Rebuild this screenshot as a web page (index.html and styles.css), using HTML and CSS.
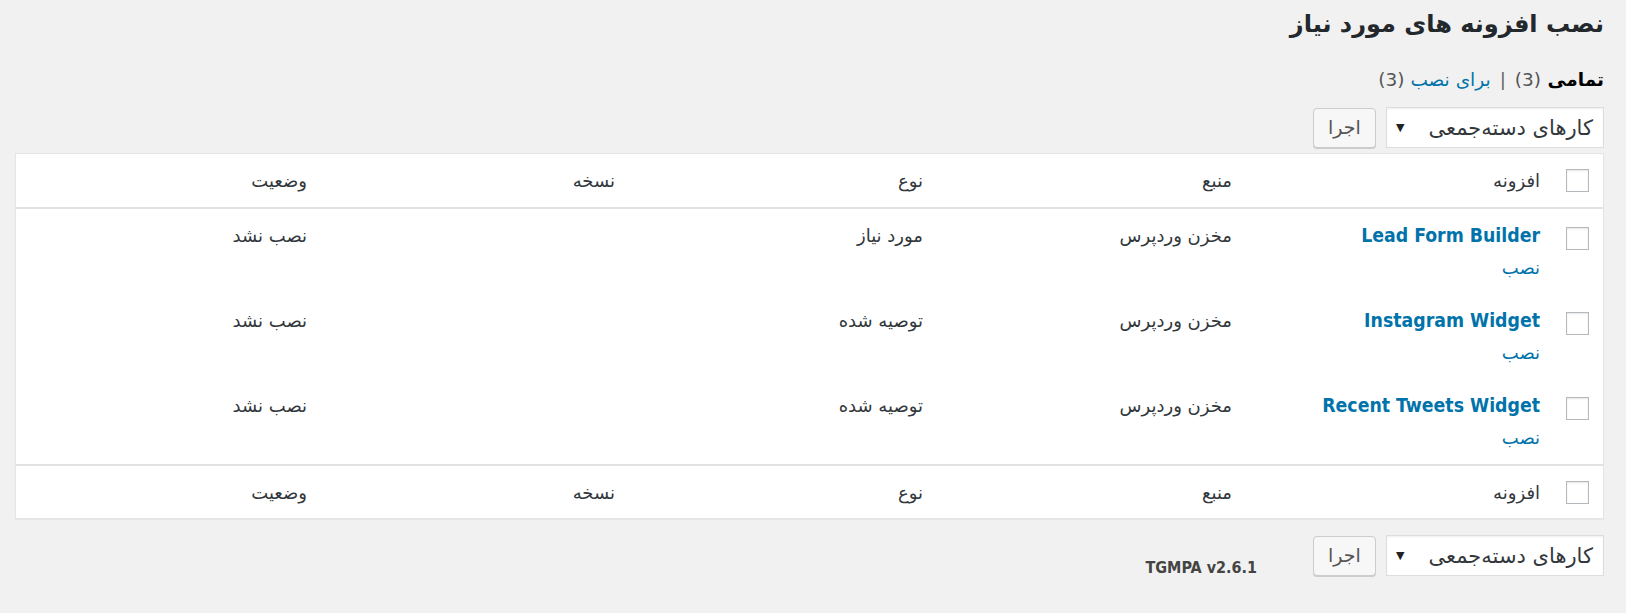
FILE: index.html
```html
<!DOCTYPE html>
<html lang="fa" dir="rtl">
<head>
<meta charset="utf-8">
<title>نصب افزونه های مورد نیاز</title>
<link rel="stylesheet" href="styles.css">
</head>
<body>
<div class="wrap">
  <h1 class="page-title">نصب افزونه های مورد نیاز</h1>
  <ul class="views">
    <li class="view"><a class="view-link current">تمامی <span class="count">(3)</span></a><span class="sep">|</span></li>
    <li class="view"><a class="view-link" href="#">برای نصب <span class="count">(3)</span></a></li>
  </ul>
  <div class="tablenav tablenav-top">
    <div class="bulk">
      <div class="fake-select"><span class="sel-text">کارهای دسته‌جمعی</span><span class="sel-arrow">▼</span></div>
      <button class="btn" type="button">اجرا</button>
    </div>
  </div>
  <table class="plugins">
    <colgroup>
      <col class="c-check"><col class="c-plugin"><col class="c-source"><col class="c-type"><col class="c-version"><col class="c-status">
    </colgroup>
    <thead>
      <tr>
        <th class="check"><input type="checkbox" class="cb"></th>
        <th>افزونه</th><th>منبع</th><th>نوع</th><th>نسخه</th><th>وضعیت</th>
      </tr>
    </thead>
    <tbody>
      <tr>
        <td class="check"><input type="checkbox" class="cb"></td>
        <td><a class="plugin-name" href="#">Lead Form Builder</a><div class="row-actions"><a href="#">نصب</a></div></td>
        <td>مخزن وردپرس</td><td>مورد نیاز</td><td></td><td>نصب نشد</td>
      </tr>
      <tr>
        <td class="check"><input type="checkbox" class="cb"></td>
        <td><a class="plugin-name" href="#">Instagram Widget</a><div class="row-actions"><a href="#">نصب</a></div></td>
        <td>مخزن وردپرس</td><td>توصیه شده</td><td></td><td>نصب نشد</td>
      </tr>
      <tr>
        <td class="check"><input type="checkbox" class="cb"></td>
        <td><a class="plugin-name" href="#">Recent Tweets Widget</a><div class="row-actions"><a href="#">نصب</a></div></td>
        <td>مخزن وردپرس</td><td>توصیه شده</td><td></td><td>نصب نشد</td>
      </tr>
    </tbody>
    <tfoot>
      <tr>
        <th class="check"><input type="checkbox" class="cb"></th>
        <th>افزونه</th><th>منبع</th><th>نوع</th><th>نسخه</th><th>وضعیت</th>
      </tr>
    </tfoot>
  </table>
  <div class="tablenav tablenav-bottom">
    <div class="bulk">
      <div class="fake-select"><span class="sel-text">کارهای دسته‌جمعی</span><span class="sel-arrow">▼</span></div>
      <button class="btn" type="button">اجرا</button>
    </div>
    <p class="version"><strong>TGMPA v2.6.1</strong></p>
  </div>
</div>
</body>
</html>
```
FILE: styles.css
```css
html, body {
  margin: 0;
  padding: 0;
  background: #f1f1f1;
}
body {
  font-family: "DejaVu Sans", sans-serif;
  color: #444;
  font-size: 18px;
}
.wrap {
  padding: 0 22px 0 15px;
}
.page-title {
  margin: 0;
  height: 48px;
  line-height: 48px;
  font-size: 24px;
  font-weight: bold;
  color: #23282d;
}
.views {
  list-style: none;
  margin: 18px 0 0;
  padding: 0;
  display: flex;
  height: 28px;
  line-height: 28px;
  font-size: 18.5px;
  color: #666;
}
.view-link {
  color: #0073aa;
  text-decoration: none;
}
.view-link.current {
  color: #000;
  font-weight: bold;
}
.count {
  color: #555;
  font-weight: normal;
}
.sep {
  margin: 0 9px;
  color: #666;
}
.tablenav {
  display: flex;
}
.tablenav-top {
  margin-top: 13px;
  height: 41px;
}
.tablenav-bottom {
  margin-top: 16px;
  align-items: flex-start;
}
.bulk {
  display: flex;
  gap: 10px;
  align-items: flex-start;
}
.fake-select {
  box-sizing: border-box;
  width: 218px;
  height: 41px;
  background: #fff;
  border: 1px solid #ddd;
  box-shadow: inset 0 1px 2px rgba(0, 0, 0, 0.07);
  display: flex;
  align-items: center;
  padding: 0 10px 0 9px;
  font-size: 21px;
  color: #32373c;
}
.sel-text {
  flex: 1;
}
.sel-arrow {
  font-size: 11px;
  color: #222;
}
.btn {
  box-sizing: border-box;
  width: 63px;
  height: 40px;
  margin-top: 1px;
  background: #f7f7f7;
  border: 1px solid #ccc;
  border-radius: 4px;
  box-shadow: 0 1px 0 #ccc;
  color: #555;
  font-family: "DejaVu Sans", sans-serif;
  font-size: 19px;
  padding: 0 0 3px;
}
.version {
  margin: 23px 56px 0 0;
  font-family: "DejaVu Sans Condensed", "DejaVu Sans", sans-serif;
  font-size: 16px;
  color: #444;
  direction: ltr;
}
.plugins {
  margin-top: 5px;
  width: 100%;
  table-layout: fixed;
  border-spacing: 0;
  background: #fff;
  border: 1px solid #e5e5e5;
  box-shadow: 0 1px 1px rgba(0, 0, 0, 0.04);
  color: #32373c;
}
.c-check { width: 53px; }
.c-plugin { width: 308px; }
.c-source { width: 309px; }
.c-type { width: 308px; }
.c-version { width: 308px; }
.plugins th,
.plugins td {
  text-align: right;
  padding: 0 10px;
  font-weight: normal;
}
.plugins thead th {
  height: 53px;
  border-bottom: 2px solid #e1e1e1;
  vertical-align: middle;
  font-size: 18px;
}
.plugins tfoot th {
  height: 52px;
  border-top: 2px solid #e1e1e1;
  vertical-align: middle;
  font-size: 18px;
}
.plugins tbody td {
  height: 85px;
  box-sizing: border-box;
  vertical-align: top;
  padding-top: 13px;
  line-height: 28px;
  font-size: 18px;
}
.plugins .check {
  padding: 0 14px 0 0;
}
.plugins tbody td.check {
  padding-top: 18px;
  line-height: 0;
}
.cb {
  -webkit-appearance: none;
  appearance: none;
  box-sizing: border-box;
  width: 23px;
  height: 23px;
  margin: 0;
  display: block;
  background: #fff;
  border: 1px solid #b4b9be;
  box-shadow: inset 0 1px 2px rgba(0, 0, 0, 0.1);
}
.plugin-name {
  font-family: "DejaVu Sans Condensed", "DejaVu Sans", sans-serif;
  font-weight: bold;
  font-size: 19.3px;
  color: #0073aa;
  text-decoration: none;
}
.row-actions {
  margin-top: 4px;
}
.row-actions a {
  color: #0073aa;
  text-decoration: none;
}
```
